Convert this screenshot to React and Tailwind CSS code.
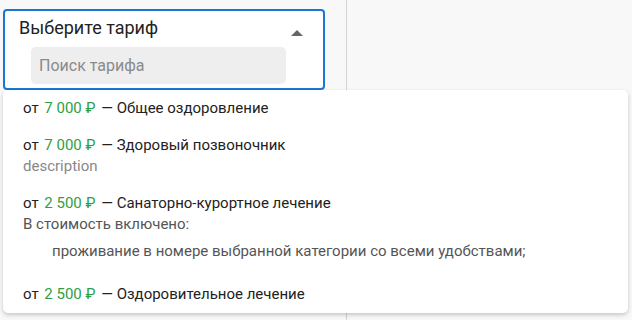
import React from 'react';

const tariffs = [
  { price: '7 000', name: 'Общее оздоровление' },
  { price: '7 000', name: 'Здоровый позвоночник', desc: 'description' },
  {
    price: '2 500',
    name: 'Санаторно-курортное лечение',
    included: ['проживание в номере выбранной категории со всеми удобствами;'],
  },
  { price: '2 500', name: 'Оздоровительное лечение' },
];

const App = () => {
  return (
    <div
      className="relative h-[320px] w-[632px] overflow-hidden bg-[#f8f8f8]"
      style={{ fontFamily: 'Roboto, "Noto Sans", sans-serif' }}
    >
      {/* Left panel with divider */}
      <div className="h-full w-[347px] border-r border-[#d4d4d4] pl-[3px] pt-[9px]">
        <div className="h-[81px] w-[322px] rounded-[4px] border-2 border-[#1976d2] bg-white">
          <div className="flex items-center justify-between pl-[14px] pr-[20px] pt-[5px]">
            <span className="text-[18px] leading-[24px] text-[#222]">Выберите тариф</span>
            <svg width="12" height="6" viewBox="0 0 12 6" className="mt-[10px]">
              <path d="M0 6 L6 0 L12 6 Z" fill="#666" />
            </svg>
          </div>
          <div className="ml-[26px] mt-[7px] flex h-[37px] w-[255px] items-center rounded-[5px] bg-[#eeeeee] px-[8px] text-[16px] text-[#8a8a8a]">
            Поиск тарифа
          </div>
        </div>
      </div>

      {/* Dropdown list */}
      <div className="absolute left-[3px] top-[90px] w-[625px] rounded-[5px] bg-white shadow-[0_2px_4px_rgba(0,0,0,0.2)]">
        {tariffs.map((t, i) => (
          <div key={i} className="px-[20px] py-[8px] text-[15px] leading-[21px] text-[#222]">
            <div>
              от <span className="px-[2px] text-[#2e9e44]">{t.price} ₽</span> — {t.name}
            </div>
            {t.desc && <div className="text-[#888]">{t.desc}</div>}
            {t.included && (
              <>
                <div className="text-[#555]">В стоимость включено:</div>
                <ul className="my-[6px] pl-[29px] text-[#555]">
                  {t.included.map((x, j) => (
                    <li key={j}>{x}</li>
                  ))}
                </ul>
              </>
            )}
          </div>
        ))}
      </div>
    </div>
  );
};

export default App;
